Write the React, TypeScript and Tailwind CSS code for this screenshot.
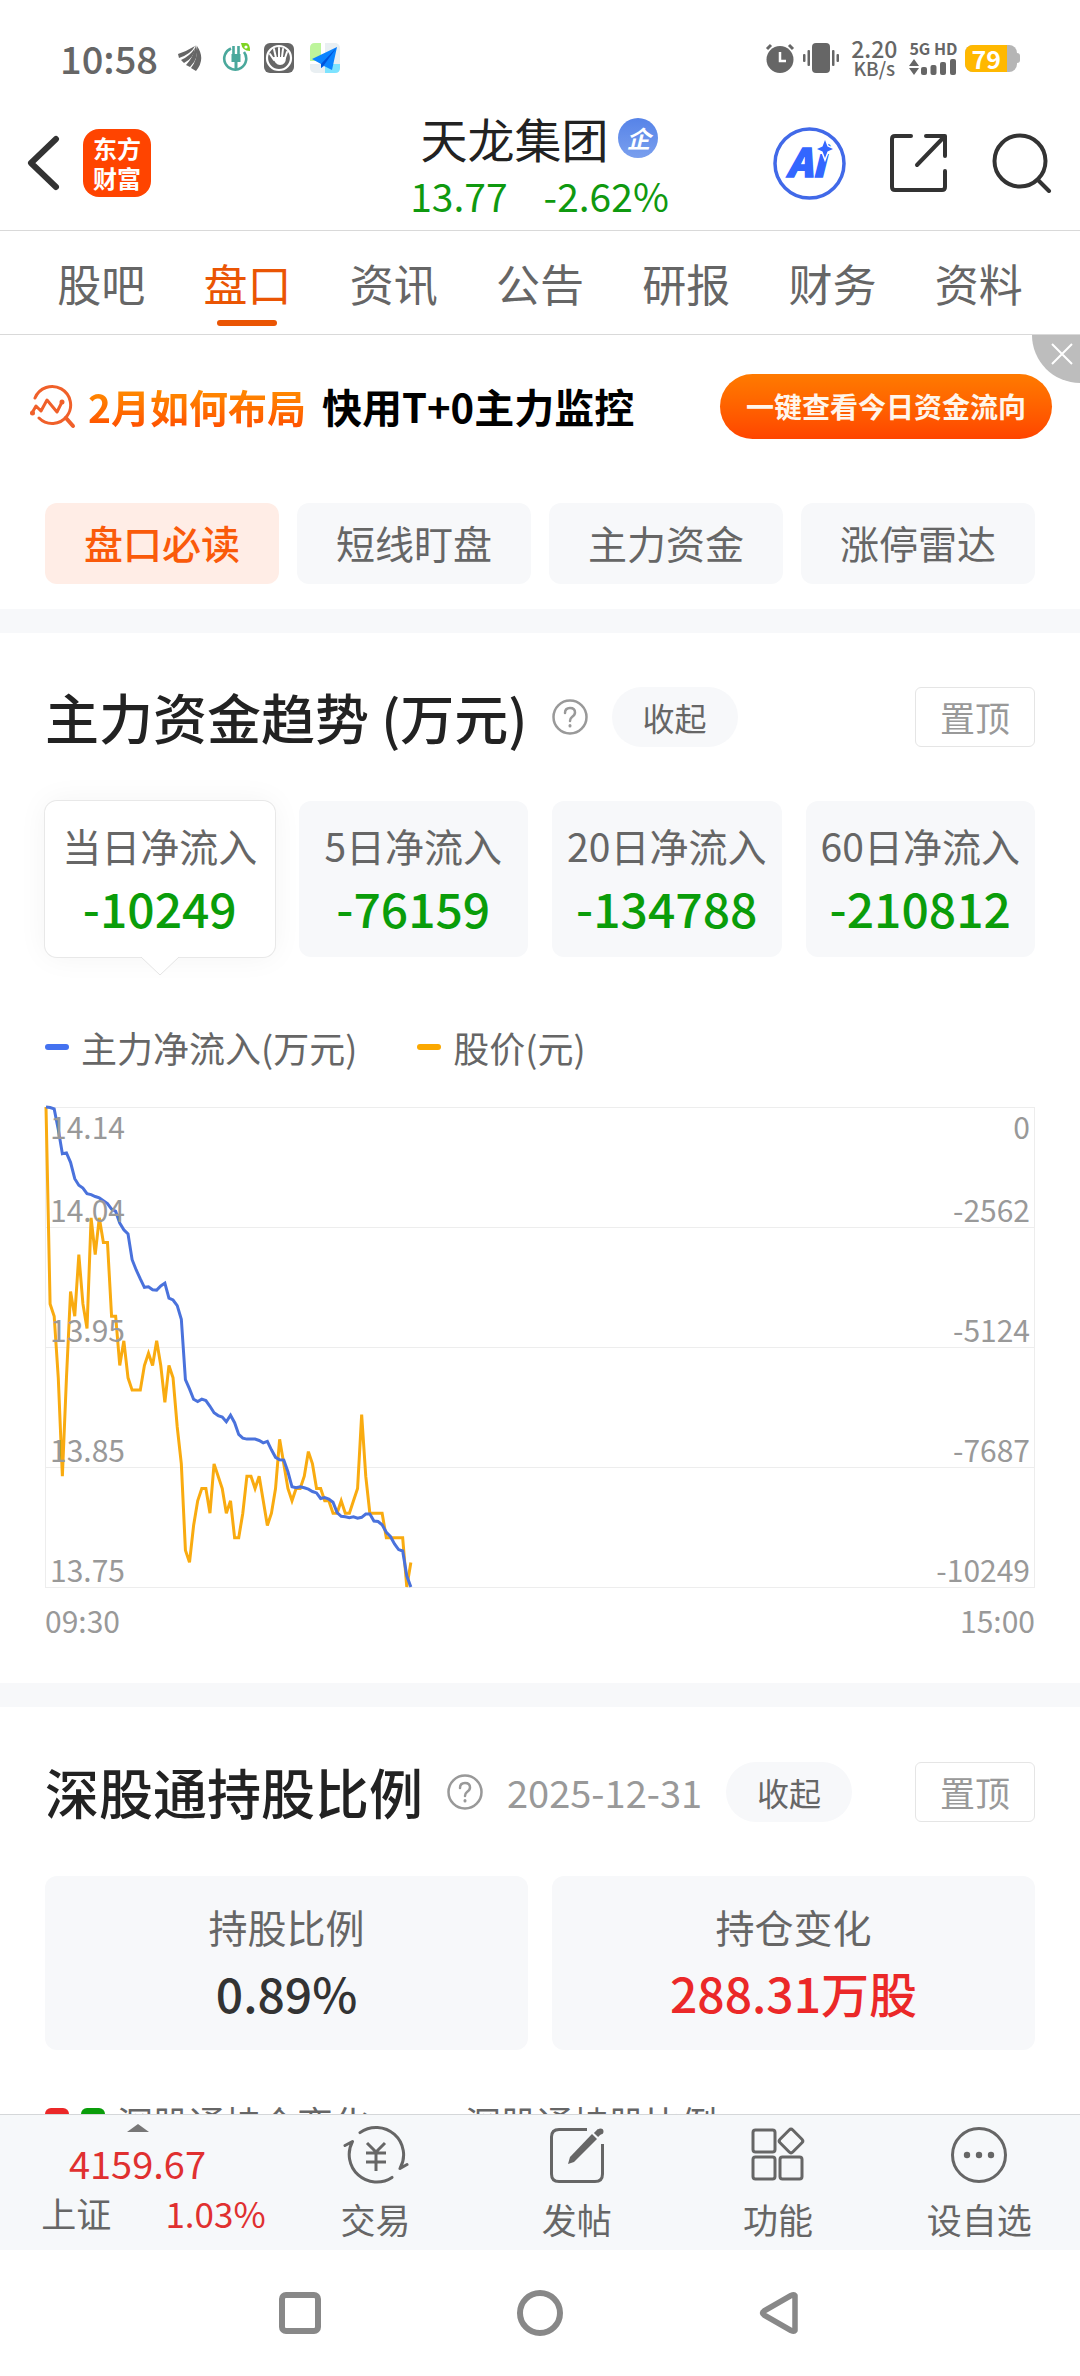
/**
 * Stock Detail Page (order book tab)
 *
 * Sections:
 * - Status bar and stock header
 * - Tabs, promo banner, shortcut chips
 * - Main capital flow trend with intraday chart
 * - Northbound holding ratio
 * - Bottom toolbar and system navigation
 */

import React, { useState } from 'react';

const TABS = ['股吧', '盘口', '资讯', '公告', '研报', '财务', '资料'];
const CHIPS = ['盘口必读', '短线盯盘', '主力资金', '涨停雷达'];

const FLOW_CARDS = [
  { label: '当日净流入', value: '-10249' },
  { label: '5日净流入', value: '-76159' },
  { label: '20日净流入', value: '-134788' },
  { label: '60日净流入', value: '-210812' },
];

const AXIS_ROWS = [
  { price: '14.04', flow: '-2562' },
  { price: '13.95', flow: '-5124' },
  { price: '13.85', flow: '-7687' },
  { price: '13.75', flow: '-10249' },
];

// One point per minute from 09:30, prices in cents
const PRICES = [
  1414, 1398, 1397, 1392, 1384, 1392, 1399, 1397, 1402, 1398, 1396, 1405, 1402, 1405, 1403, 1403, 1397, 1397,
  1393, 1395, 1392, 1391, 1391, 1391, 1393, 1394, 1393, 1395, 1393, 1390, 1393, 1392, 1388, 1385, 1378, 1377,
  1380, 1382, 1383, 1383, 1381, 1385, 1384, 1383, 1381, 1382, 1379, 1379, 1381, 1384, 1384, 1383, 1384, 1382,
  1380, 1381, 1383, 1387, 1385, 1383, 1382, 1383, 1383, 1384, 1386, 1385, 1383, 1383, 1382, 1382, 1381, 1381,
  1382, 1381, 1381, 1382, 1383, 1389, 1384, 1381, 1381, 1381, 1381, 1379, 1379, 1379, 1379, 1379, 1375, 1377,
];

// Cumulative net outflow
const OUTFLOWS = [
  0, 10, 40, 480, 1000, 980, 1180, 1530, 1670, 1730, 1850, 1870, 1910, 1940, 2000, 2060, 2180, 2230, 2480, 2620,
  2710, 3260, 3480, 3670, 3850, 3840, 3900, 3910, 3820, 3760, 4080, 4120, 4240, 4530, 5820, 6020, 6240, 6290,
  6240, 6270, 6390, 6530, 6590, 6620, 6720, 6580, 6740, 6990, 7070, 7090, 7090, 7090, 7120, 7170, 7140, 7320,
  7480, 7530, 7540, 7790, 8110, 8130, 8110, 8130, 8160, 8210, 8240, 8360, 8340, 8370, 8440, 8660, 8740, 8750,
  8770, 8750, 8780, 8760, 8690, 8690, 8840, 8850, 8920, 9080, 9170, 9330, 9450, 9480, 10010, 10249,
];

const CHART_W = 990;
const CHART_H = 480;
const MINUTES = 241;

function toPoints(values: number[], top: number, bottom: number) {
  return values
    .map((v, i) => {
      const x = (i / MINUTES) * CHART_W;
      const y = ((v - top) / (bottom - top)) * CHART_H;
      return `${x.toFixed(1)},${y.toFixed(1)}`;
    })
    .join(' ');
}

function StatusBar() {
  return (
    <div className="flex h-24 shrink-0 items-center justify-between pt-5 pr-[60px] pl-[60px] text-[#666]">
      <div className="flex items-center">
        <span className="text-[38px] leading-[40px] font-medium">10:58</span>
        <svg className="ml-5 h-[26px] w-6" viewBox="0 0 24 26" fill="#666">
          <path d="M0 9 Q9 6 17 1 Q13 9 1 13 Z" />
          <path d="M3 15 Q12 11 17 3 Q16 13 6 18 Z" />
          <path d="M8 20 Q15 13 18 0 Q22 12 12 22 Z" />
          <path d="M13 23 Q20 14 19 1 Q28 14 18 26 Z" />
        </svg>
        <svg className="ml-5 h-[30px] w-[30px]" viewBox="0 0 30 30" fill="none">
          <path d="M9 5.500 A11 11 0 1 0 22 9" stroke="#4aa89c" strokeWidth="2.600" />
          <path d="M11.500 3 V12 M16.500 3 V12" stroke="#4aa89c" strokeWidth="2.600" />
          <path d="M9.500 11 H18.500 V19 H9.500z M12.500 19 h3 v7 h-3z" fill="#4aa89c" />
          <path d="M19 0 h5 q4 0 4 8 q-8 0 -9 -8z" fill="#7ed321" />
          <circle cx="24" cy="4" r="1.600" fill="#fff" />
        </svg>
        <svg className="ml-3 h-[30px] w-[30px]" viewBox="0 0 30 30" fill="none">
          <rect width="30" height="30" rx="6" fill="#666" />
          <circle cx="15" cy="15" r="12" stroke="#fff" strokeWidth="2.200" />
          <path
            d="M10 17 L6 11 M12 15 L10 6 M15 14 V5 M18 14 L19 6 M21 15 L23 9"
            stroke="#fff"
            strokeWidth="2"
            strokeLinecap="round"
          />
          <path d="M9 14 h13 q0 8 -6 8 q-5 0 -7 -8z" fill="#fff" />
        </svg>
        <svg className="ml-4 h-[30px] w-[30px]" viewBox="0 0 30 30">
          <rect width="30" height="30" rx="5" fill="#e9eff2" />
          <path d="M5 0 H11 V18 H0 V5 Q0 0 5 0z" fill="#bdf59b" />
          <path d="M15 21 H30 V25 Q30 30 25 30 H15z" fill="#7de3ff" />
          <path d="M0 18 h16 v3 H0z M11 0 h4 v18 h-4z" fill="#fff" />
          <path d="M2 16 L27 4 L22 27 L14 23 L11 25 V21z" fill="#0b84ff" />
          <path d="M27 4 L11 21 V25 L14 22z" fill="#0052d9" />
        </svg>
      </div>

      <div className="flex items-center">
        <svg className="h-[30px] w-[30px]" viewBox="0 0 30 30" fill="none">
          <circle cx="15" cy="16.500" r="13.500" fill="#666" />
          <path d="M2 6 L6 2 M28 6 L24 2" stroke="#666" strokeWidth="3" />
          <path d="M15 9 V18 H21" stroke="#fff" strokeWidth="2.500" />
        </svg>
        <svg className="ml-2 h-[30px] w-9" viewBox="0 0 36 30" fill="#666">
          <rect x="9" width="18" height="30" rx="4" />
          <rect x="4.500" y="7" width="2.500" height="16" rx="1" />
          <rect x="29" y="7" width="2.500" height="16" rx="1" />
          <rect y="11" width="2.500" height="8" rx="1" />
          <rect x="33.500" y="11" width="2.500" height="8" rx="1" />
        </svg>
        <div className="ml-3 text-center font-medium">
          <div className="text-[23px] leading-5">2.20</div>
          <div className="text-[19px] leading-5">KB/s</div>
        </div>
        <div className="ml-3 flex flex-col gap-1">
          <div className="text-[16px] leading-[14px] font-bold">5G HD</div>
          <svg className="h-4 w-12" viewBox="0 0 48 16" fill="#666">
            <path d="M5 0 L10 7 H0z M5 16 L0 9 H10z" />
            <rect x="12" y="8" width="6" height="8" rx="2" />
            <rect x="21.500" y="6" width="6" height="10" rx="2" />
            <rect x="31" y="3" width="6" height="13" rx="2" />
            <rect x="41" width="6" height="16" rx="2" />
          </svg>
        </div>
        <div className="ml-2 flex items-center">
          <div className="h-[27px] rounded-lg bg-[#b5b5b5] pr-2.5">
            <span className="block rounded-l-lg bg-[#ffb800] px-1.5 text-[25px] leading-[27px] font-bold text-white">79</span>
          </div>
          <div className="h-2.5 w-[3px] rounded-r-sm bg-[#b5b5b5]" />
        </div>
      </div>
    </div>
  );
}

function Header() {
  return (
    <header className="grid h-[135px] shrink-0 grid-cols-[1fr_auto_1fr] items-center border-b border-[#d9d9d9] pr-7 pl-[27px]">
      <div className="flex items-center gap-[23px]">
        <button type="button" aria-label="返回">
          <svg className="h-14 w-[33px]" viewBox="0 0 33 56" fill="none" stroke="#333" strokeWidth="6" strokeLinecap="round">
            <path d="M29 4 L4 28 L29 52" strokeLinejoin="round" />
          </svg>
        </button>
        <div className="flex h-[68px] w-[68px] items-center justify-center rounded-2xl bg-[#ff4400] text-center text-[24px] leading-[30px] font-bold text-white">
          东方
          <br />
          财富
        </div>
      </div>

      <div className="flex flex-col items-center pt-1.5">
        <h1 className="flex items-center gap-2.5 text-[47px] leading-[58px] text-[#222]">
          天龙集团
          <span className="flex h-10 w-10 items-center justify-center rounded-full bg-gradient-to-b from-[#5683e8] to-[#7a9fee] text-[24px] leading-[24px] font-bold text-white italic">
            企
          </span>
        </h1>
        <div className="flex gap-9 text-[39px] leading-[56px] text-[#0f990f]">
          <span>13.77</span>
          <span>-2.62%</span>
        </div>
      </div>

      <div className="flex items-center justify-end gap-11">
        <button type="button" aria-label="AI 助手">
          <svg className="h-[73px] w-[73px]" viewBox="0 0 73 73">
            <circle cx="36.500" cy="36.500" r="34.500" fill="none" stroke="#4169e8" strokeWidth="3.500" />
            <text
              x="33"
              y="50"
              textAnchor="middle"
              className="text-[39px] font-black italic"
              fill="#3366ff"
              stroke="#3366ff"
              strokeWidth="1.500"
            >
              Ai
            </text>
            <path
              d="M52 13 L54.500 19.500 L60 22 L54.500 24.500 L52 31 L49.500 24.500 L44 22 L49.500 19.500z"
              fill="#3366ff"
              stroke="#fff"
              strokeWidth="3"
              paintOrder="stroke"
            />
          </svg>
        </button>
        <button type="button" aria-label="分享">
          <svg className="h-[58px] w-[58px]" viewBox="0 0 58 58" fill="none" stroke="#333" strokeWidth="4" strokeLinecap="round" strokeLinejoin="round">
            <path d="M21 2 H5 Q2 2 2 5 V53 Q2 56 5 56 H52 Q55 56 55 53 V37" />
            <path d="M36 2 H55 V22 M27 31 L54 3" />
          </svg>
        </button>
        <button type="button" aria-label="搜索">
          <svg className="h-[60px] w-[60px]" viewBox="0 0 60 60" fill="none" stroke="#333" strokeWidth="4" strokeLinecap="round">
            <circle cx="28" cy="28" r="25.500" />
            <path d="M46 47 L57 58" />
          </svg>
        </button>
      </div>
    </header>
  );
}

function Tabs() {
  const [active, setActive] = useState('盘口');

  return (
    <nav className="grid h-[104px] shrink-0 grid-cols-7 border-b border-[#d9d9d9] px-7">
      {TABS.map((tab) => (
        <button
          key={tab}
          type="button"
          onClick={() => setActive(tab)}
          className={`flex flex-col items-center pt-5 text-[44px] ${tab === active ? 'text-[#ea5504]' : 'text-[#666]'}`}
        >
          <span className="leading-[64px]">{tab}</span>
          {tab === active && <span className="mt-[5px] h-1.5 w-[60px] rounded-full bg-[#ea5504]" />}
        </button>
      ))}
    </nav>
  );
}

function Banner() {
  return (
    <div className="relative flex h-[142px] items-center justify-between pr-7 pl-[30px]">
      <div className="flex items-center leading-[48px] font-bold">
        <svg className="h-[45px] w-[46px]" viewBox="0 0 46 45" fill="none" stroke="#f0602a" strokeWidth="3" strokeLinecap="round" strokeLinejoin="round">
          <path d="M5 14 A18.500 18.500 0 1 1 9 34" />
          <path d="M36 34 L43 42" strokeWidth="4" />
          <path d="M2 29 L6 22 L11 27 L17 16 L27 28 L32 18" />
          <circle cx="2.500" cy="29" r="1" />
          <circle cx="32" cy="18" r="1" />
        </svg>
        <span className="ml-3 bg-gradient-to-b from-[#ff9500] to-[#ff4a00] bg-clip-text text-[39px] text-transparent">
          2月如何布局
        </span>
        <span className="ml-4 text-[40px] text-black">快用T+0主力监控</span>
      </div>
      <button
        type="button"
        className="h-[65px] rounded-full bg-gradient-to-b from-[#ff7a00] to-[#ff4400] px-[26px] text-[28px] leading-[40px] font-bold text-[#fff6ec]"
      >
        一键查看今日资金流向
      </button>
      <button type="button" aria-label="关闭" className="absolute top-0 right-0 h-12 w-12 rounded-bl-full bg-[#bdbdbd]">
        <svg className="h-12 w-12" viewBox="0 0 48 48" stroke="#fff" strokeWidth="2">
          <path d="M20 9 L40 29 M40 9 L20 29" />
        </svg>
      </button>
    </div>
  );
}

function Chips() {
  const [active, setActive] = useState('盘口必读');

  return (
    <div className="grid grid-cols-4 gap-[18px] px-[45px] pt-[26px] pb-[25px]">
      {CHIPS.map((chip) => (
        <button
          key={chip}
          type="button"
          onClick={() => setActive(chip)}
          className={`h-[81px] rounded-xl pb-1 text-[39px] leading-[60px] ${
            chip === active ? 'bg-[#ffede6] font-medium text-[#fa5a0a]' : 'bg-[#f7f8fa] text-[#666]'
          }`}
        >
          {chip}
        </button>
      ))}
    </div>
  );
}

function SectionHeader({ title, date }: { title: string; date?: string }) {
  return (
    <div className="flex items-center gap-6">
      <h2 className="text-[54px] leading-[60px] font-medium text-[#222]">{title}</h2>
      <button type="button" aria-label="说明">
        <svg className="h-9 w-9" viewBox="0 0 36 36" fill="none" stroke="#999" strokeWidth="2.500" strokeLinecap="round">
          <circle cx="18" cy="18" r="16.500" />
          <path d="M13 14 Q13 9 18 9 Q23 9 23 13.500 Q23 16 20 18 Q18 19.500 18 22" />
          <path d="M18 26.500 v0.500" strokeWidth="3" />
        </svg>
      </button>
      {date && <span className="text-[38px] leading-[60px] text-[#999]">{date}</span>}
      <button type="button" className="h-[60px] w-[126px] rounded-full bg-[#f7f8fa] text-[32px] leading-[48px] text-[#666]">
        收起
      </button>
      <button type="button" className="ml-auto h-[60px] w-[120px] rounded-md border border-[#e5e5e5] text-[35px] leading-[48px] text-[#999]">
        置顶
      </button>
    </div>
  );
}

function FlowChart() {
  return (
    <div>
      <div className="relative border-r border-b border-l border-[#ededed] text-[30px] leading-9 text-[#999]">
        <svg
          className="absolute inset-0 h-full w-full overflow-visible"
          viewBox={`0 0 ${CHART_W} ${CHART_H}`}
          preserveAspectRatio="none"
          fill="none"
          strokeWidth="3"
        >
          <polyline points={toPoints(PRICES, 1414, 1375)} stroke="#f9ab10" />
          <polyline points={toPoints(OUTFLOWS, 0, 10249)} stroke="#4a72dc" />
        </svg>
        {/* Labels are lifted above the lines, the row borders stay below them */}
        {AXIS_ROWS.map((row, i) => (
          <div key={row.price} className="flex h-[120px] flex-col justify-between border-t border-[#ededed] px-1">
            <div className="relative flex justify-between">
              <span>{i === 0 && '14.14'}</span>
              <span>{i === 0 && '0'}</span>
            </div>
            <div className="relative flex justify-between">
              <span>{row.price}</span>
              <span>{row.flow}</span>
            </div>
          </div>
        ))}
      </div>
      <div className="mt-2 flex justify-between text-[30px] leading-[48px] text-[#999]">
        <span>09:30</span>
        <span>15:00</span>
      </div>
    </div>
  );
}

function CapitalFlowSection() {
  const [active, setActive] = useState(0);

  return (
    <section className="px-[45px] pt-[54px] pb-[39px]">
      <SectionHeader title="主力资金趋势 (万元)" />

      {/* Period cards */}
      <div className="mt-[54px] grid grid-cols-4 gap-6">
        {FLOW_CARDS.map((card, i) => (
          <button
            key={card.label}
            type="button"
            onClick={() => setActive(i)}
            className={`relative flex h-[156px] flex-col items-center rounded-xl pt-3.5 ${
              i === active ? 'bg-white shadow-[0_0_30px_rgba(0,0,0,0.05)] ring-1 ring-[#e8e8e8]' : 'bg-[#f7f8fa]'
            }`}
          >
            <span className="text-[39px] leading-[60px] text-[#666]">{card.label}</span>
            <span className="text-[48px] leading-[64px] font-medium text-[#0a9d0a]">{card.value}</span>
            {i === active && (
              <svg className="absolute top-full left-1/2 h-5 w-10 -translate-x-1/2" viewBox="0 0 40 20">
                <path d="M1 0 L20 18 L39 0" fill="#fff" stroke="#e4e4e4" />
              </svg>
            )}
          </button>
        ))}
      </div>

      {/* Legend */}
      <div className="mt-[66px] mb-9 flex items-center gap-[60px] text-[36px] leading-[48px] text-[#666]">
        <div className="flex items-center gap-3">
          <span className="h-1.5 w-6 rounded-full bg-[#4472f0]" />
          主力净流入(万元)
        </div>
        <div className="flex items-center gap-3">
          <span className="h-1.5 w-6 rounded-full bg-[#fba800]" />
          股价(元)
        </div>
      </div>

      <FlowChart />
    </section>
  );
}

function HoldingSection() {
  return (
    <section className="px-[45px] pt-[55px]">
      <SectionHeader title="深股通持股比例" date="2025-12-31" />

      <div className="mt-[54px] grid grid-cols-2 gap-6 text-center">
        <div className="rounded-xl bg-[#f7f8fa] pt-5 pb-[22px]">
          <div className="text-[39px] leading-[60px] text-[#666]">持股比例</div>
          <div className="text-[48px] leading-[72px] font-medium text-[#333]">0.89%</div>
        </div>
        <div className="rounded-xl bg-[#f7f8fa] pt-5 pb-[22px]">
          <div className="text-[39px] leading-[60px] text-[#666]">持仓变化</div>
          <div className="text-[48px] leading-[72px] font-medium text-[#eb2828]">288.31万股</div>
        </div>
      </div>

      <div className="mt-12 flex items-center text-[36px] leading-[48px] text-[#666]">
        <span className="h-7 w-6 rounded-md bg-[#eb2828]" />
        <span className="ml-3 h-7 w-6 rounded-md bg-[#0a9d0a]" />
        <span className="ml-3">深股通持仓变化</span>
        <span className="ml-[60px] h-1.5 w-6 rounded-full bg-[#fba800]" />
        <span className="ml-3">深股通持股比例</span>
      </div>
    </section>
  );
}

function ToolbarButton({ label, children }: { label: string; children: React.ReactNode }) {
  return (
    <button type="button" className="flex flex-1 flex-col items-center pt-2.5 text-[#666]">
      {children}
      <span className="mt-2.5 text-[35px] leading-[48px]">{label}</span>
    </button>
  );
}

function Toolbar() {
  return (
    <div className="flex h-[136px] shrink-0 border-t border-[#d5d7d9] bg-[#f6f8fa]">
      <button type="button" className="flex w-[275px] flex-col items-center pt-[9px]">
        <svg className="h-2 w-[22px]" viewBox="0 0 22 8" fill="#777">
          <path d="M11 0 L22 8 H0z" />
        </svg>
        <span className="mt-1.5 text-[38px] leading-[50px] text-[#e03030]">4159.67</span>
        <span className="flex gap-[54px] pl-8 text-[35px] leading-[50px]">
          <span className="text-[#666]">上证</span>
          <span className="text-[#e03030]">1.03%</span>
        </span>
      </button>
      <ToolbarButton label="交易">
        <svg className="h-[60px] w-[66px]" viewBox="0 0 66 60" fill="none" stroke="#666" strokeWidth="3" strokeLinecap="round" strokeLinejoin="round">
          <path d="M17 7.600 A27.500 27.500 0 0 1 57 43.500 L64 39.500" />
          <path d="M49 52.400 A27.500 27.500 0 0 1 9.500 16.500 L2 20.500" />
          <path d="M24 18 L33 27 L42 18 M23 28 H43 M23 37 H43 M33 27 V46" strokeLinecap="butt" />
        </svg>
      </ToolbarButton>
      <ToolbarButton label="发帖">
        <svg className="h-[60px] w-[58px]" viewBox="0 0 58 60" fill="none" stroke="#666" strokeWidth="3">
          <path d="M39 4.500 H11 Q3.500 4.500 3.500 12 V49 Q3.500 56.500 11 56.500 H47 Q54.500 56.500 54.500 49 V19" />
          <path d="M44 9 L49 14 L26 37 L20 39 L22 32z" fill="#666" stroke="none" />
          <path d="M48 10 L52 6" strokeWidth="6" />
          <circle cx="52.500" cy="6.500" r="1.500" />
        </svg>
      </ToolbarButton>
      <ToolbarButton label="功能">
        <svg className="h-[60px] w-[56px]" viewBox="0 0 56 60" fill="none" stroke="#666" strokeWidth="3">
          <rect x="3" y="5" width="22" height="22" rx="2.500" />
          <rect x="3" y="32" width="22" height="22" rx="2.500" />
          <rect x="30" y="32" width="22" height="22" rx="2.500" />
          <rect x="32" y="7" width="18" height="18" rx="2.500" transform="rotate(45 41 16)" />
        </svg>
      </ToolbarButton>
      <ToolbarButton label="设自选">
        <svg className="h-[60px] w-[60px]" viewBox="0 0 60 60" fill="#666">
          <circle cx="30" cy="30" r="26.500" fill="none" stroke="#666" strokeWidth="3" />
          <circle cx="18" cy="30" r="3.200" />
          <circle cx="30" cy="30" r="3.200" />
          <circle cx="42" cy="30" r="3.200" />
        </svg>
      </ToolbarButton>
    </div>
  );
}

function SystemNav() {
  return (
    <div className="flex h-[126px] shrink-0 items-center justify-center gap-[192px] bg-white">
      <button type="button" aria-label="最近任务">
        <svg className="h-12 w-12" viewBox="0 0 48 48" fill="none" stroke="#888" strokeWidth="6">
          <rect x="6" y="6" width="36" height="36" rx="4" />
        </svg>
      </button>
      <button type="button" aria-label="主屏幕">
        <svg className="h-12 w-12" viewBox="0 0 48 48" fill="none" stroke="#888" strokeWidth="6">
          <circle cx="24" cy="24" r="20" />
        </svg>
      </button>
      <button type="button" aria-label="返回上一级">
        <svg className="h-12 w-12" viewBox="0 0 48 48" fill="none" stroke="#888" strokeWidth="5.500" strokeLinejoin="round">
          <path d="M39 6.500 V41.500 Q38 43 35 41.500 L8 26 Q5 24 8 22 L35 6.500 Q38 5 39 6.500z" />
        </svg>
      </button>
    </div>
  );
}

export default function App() {
  return (
    <div className="flex h-screen flex-col bg-white font-['Noto_Sans_CJK_SC','Noto_Sans',sans-serif]">
      <StatusBar />
      <Header />
      <Tabs />
      <main className="min-h-0 flex-1 overflow-y-auto [scrollbar-width:none]">
        <Banner />
        <Chips />
        <div className="h-6 bg-[#f7f8fa]" />
        <CapitalFlowSection />
        <div className="h-6 bg-[#f7f8fa]" />
        <HoldingSection />
      </main>
      <Toolbar />
      <SystemNav />
    </div>
  );
}
